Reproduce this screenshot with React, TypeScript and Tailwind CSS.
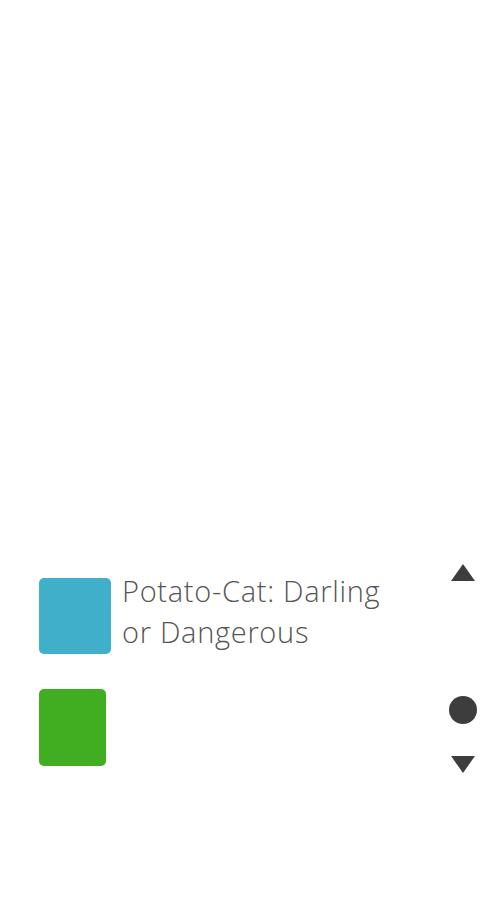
import React from "react";

export default function App() {
  return (
    <div className="w-[500px] h-[900px] bg-white flex" style={{ fontFamily: "'Open Sans', Lato, sans-serif" }}>
      <div className="flex-1 pt-[578px] pl-[39px] flex flex-col gap-[35px]">
        <div className="flex items-start">
          <div className="w-[72px] h-[76px] rounded-[5px] bg-[#40afca] shrink-0" />
          <div className="ml-[11px] mt-[-8px] text-[29px] leading-[41px] tracking-[0.7px] font-light text-[#555555] w-[275px]">
            Potato-Cat: Darling or Dangerous
          </div>
        </div>
        <div className="flex items-start">
          <div className="w-[67px] h-[77px] rounded-[5px] bg-[#41ad20] shrink-0" />
          <div className="ml-[22px] mt-[-8px] text-[29px] leading-[41px] tracking-[0.7px] font-light text-white w-[275px]">
            Goblin Cat in the Dungeon
          </div>
        </div>
      </div>
      <div className="w-[28px] mr-[23px] pt-[564px] flex flex-col items-center">
        <svg width="24" height="17" viewBox="0 0 24 17" className="block">
          <polygon points="12,0 24,17 0,17" fill="#3d3d3d" />
        </svg>
        <div className="mt-[115px] w-[28px] h-[28px] rounded-full bg-[#3d3d3d]" />
        <svg width="24" height="17" viewBox="0 0 24 17" className="block mt-[32px]">
          <polygon points="0,0 24,0 12,17" fill="#3d3d3d" />
        </svg>
      </div>
    </div>
  );
}
